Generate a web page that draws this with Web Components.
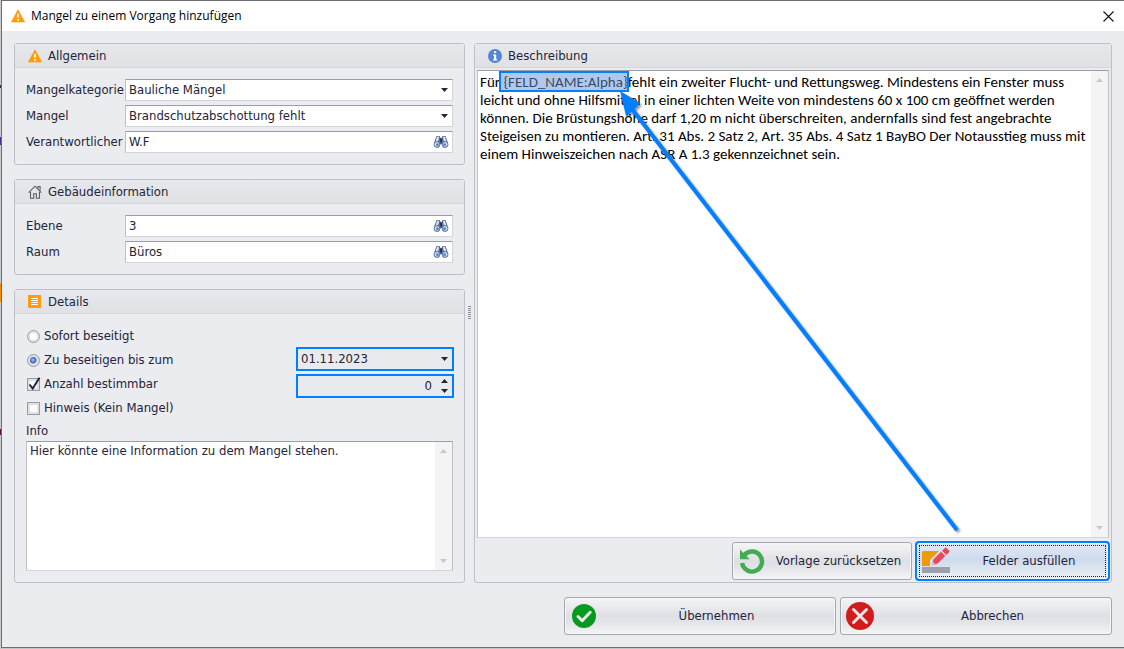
<!DOCTYPE html>
<html lang="de">
<head>
<meta charset="utf-8">
<title>Mangel zu einem Vorgang hinzufügen</title>
<style>
    html, body {
        height: 100%;
    }

    body {
        --text-color: #24243a;
        --panel-color: #ebecef;
        --border-color: #bfc0c7;
        --mark-color: #0080ff;
        margin: 0;
        color: var(--text-color);
        font: 13px/20px "DejaVu Sans Condensed", Tahoma, sans-serif;
    }
</style>
</head>
<body>
<defect-dialog data-title="Mangel zu einem Vorgang hinzufügen">
    <group-box slot="left" data-header="Allgemein" data-icon="warning">
        <lookup-field data-label="Mangelkategorie" data-value="Bauliche Mängel" data-type="select"></lookup-field>
        <lookup-field data-label="Mangel" data-value="Brandschutzabschottung fehlt" data-type="select"></lookup-field>
        <lookup-field data-label="Verantwortlicher" data-value="W.F"></lookup-field>
    </group-box>
    <group-box slot="left" data-header="Gebäudeinformation" data-icon="house">
        <lookup-field data-label="Ebene" data-value="3"></lookup-field>
        <lookup-field data-label="Raum" data-value="Büros"></lookup-field>
    </group-box>
    <group-box slot="left" class="grow" data-header="Details" data-icon="list">
        <defect-details></defect-details>
    </group-box>
    <group-box slot="right" class="flush" data-header="Beschreibung" data-icon="info">
        <defect-description></defect-description>
    </group-box>
    <action-button slot="footer" data-label="Übernehmen" data-icon="check"></action-button>
    <action-button slot="footer" data-label="Abbrechen" data-icon="cancel"></action-button>
</defect-dialog>

<script>
const icons = {
    warning: `<svg width="14" height="14" viewBox="0 0 14 14"><path d="M7 .8 13.7 13H.3Z" fill="#ff9c0a" stroke="#ff9c0a" stroke-linejoin="round" stroke-width=".6"/><path d="M6 4.8h2v4H6zM6 10h2v1.7H6z" fill="#f1eee8"/></svg>`,
    house: `<svg width="14" height="14" viewBox="0 0 14 14"><path d="M.7 7.6 7 1.2l6.3 6.4M2.5 7v6.3h3.2V8.7h2.7v4.6h3.1V7M10 3.4V1.5h2.1v4" fill="none" stroke="#5c5c68" stroke-width="1.1"/></svg>`,
    list: `<svg width="14" height="14" viewBox="0 0 14 14"><path d="M0 0h13v13H0z" fill="#ff9c0a"/><path d="M3 3.5h7M3 5.5h7M3 7.5h7M3 9.5h7" stroke="#fff" stroke-width="1"/></svg>`,
    info: `<svg width="14" height="14" viewBox="0 0 14 14"><circle cx="7" cy="7" r="7" fill="#5484d6"/><path d="M6 2.3h2.2v1.8H6zM5 5.5h3.2v4.8h1v1.2H5v-1.2h1V6.6H5z" fill="#fff"/></svg>`,
    search: `<svg width="16" height="14" viewBox="0 0 16 14"><path d="M3.5 1h3l1 2h1l1-2h3L15 8v3l-2 1.5h-3L8.5 9h-1L6 12.5H3L1 11V8Z" fill="#55688f"/><path d="M4 1.8h2L5.5 5.5 2.4 7.8ZM12 1.8h-2l.5 3.7 3.1 2.3Z" fill="#dfe6f2"/><circle cx="3.9" cy="9.4" r="2.9" fill="#d3deef" stroke="#5f73a0"/><circle cx="12.1" cy="9.4" r="2.9" fill="#d3deef" stroke="#5f73a0"/><circle cx="4.4" cy="9.7" r="1.4" fill="#557ec5"/><circle cx="11.6" cy="9.7" r="1.4" fill="#557ec5"/><path d="M7 3.5h2v4H7z" fill="#26365f"/></svg>`,
    down: `<svg width="7" height="4" viewBox="0 0 7 4"><path d="M0 0h7L3.5 4Z" fill="currentColor"/></svg>`,
    up: `<svg width="7" height="4" viewBox="0 0 7 4"><path d="M0 4h7L3.5 0Z" fill="currentColor"/></svg>`,
    check: `<svg width="28" height="28" viewBox="0 0 28 28"><circle cx="14" cy="14" r="12" fill="#069a20"/><path d="m8 14.5 4.2 4.2 8-8.4" fill="none" stroke="#e8f0ea" stroke-width="3" stroke-linecap="round" stroke-linejoin="round"/></svg>`,
    cancel: `<svg width="28" height="28" viewBox="0 0 28 28"><circle cx="14" cy="14" r="14" fill="#d21c1c"/><path d="m7.5 7.5 13 13m0-13-13 13" stroke="#f0e6e8" stroke-width="3" stroke-linecap="round"/></svg>`,
    reset: `<svg width="28" height="28" viewBox="0 0 28 28"><path d="M6.2 8.3A10 10 0 1 1 4.1 16" fill="none" stroke="#43ab50" stroke-width="4.4"/><path d="M2 2.5v9.7h9.7Z" fill="#43ab50"/></svg>`,
    edit: `<svg width="28" height="28" viewBox="0 0 28 28"><path d="M0 5 1 4h16L8 13v6H0Z" fill="#eb9d08"/><path d="M0 20h28v6H0z" fill="#9b9fae"/><path d="m9.8 18.2 1.8-6L19 4.8l4.3 4.3-7.5 7.5ZM20 3.8l2.9-2.9q.8-.8 1.6 0l2.7 2.7q.8.8 0 1.6l-2.9 2.9Z" fill="#e9485c"/><path d="m10 18 3-1-2-2Z" fill="#f3d8dc"/></svg>`,
    close: `<svg width="11" height="11" viewBox="0 0 11 11"><path d="m.5.5 10 10m0-10-10 10" stroke="#111" stroke-width="1.1"/></svg>`
};

const fieldStyles = `
    * {
        box-sizing: border-box;
    }
    .box {
        display: flex;
        align-items: center;
        height: 22px;
        min-width: 0;
        border: 1px solid #d4d5da;
        border-top-color: #9b9da6;
        border-left-color: #bfc0c8;
        background: white;
        position: relative;
    }
    input, select {
        appearance: none;
        flex: 1;
        width: 100%;
        min-width: 0;
        height: 20px;
        margin: 0;
        padding: 0 3px;
        border: 0;
        outline: 0;
        background: none;
        color: inherit;
        font: inherit;
    }
    button {
        display: flex;
        border: 0;
        padding: 0;
        background: none;
        color: inherit;
    }
    .arrow {
        display: flex;
        position: absolute;
        right: 4px;
        pointer-events: none;
    }
`;

const scrollStyles = `
    * {
        box-sizing: border-box;
    }
    .memo {
        display: flex;
        flex: 1;
        min-height: 0;
        border: 1px solid #d4d5da;
        border-top-color: #9b9da6;
        border-left-color: #bfc0c8;
        border-right-color: #bfc0c8;
        background: white;
    }
    textarea {
        flex: 1;
        min-width: 0;
        margin: 0;
        padding: 0 3px;
        border: 0;
        outline: 0;
        resize: none;
        overflow: hidden;
        background: none;
        color: inherit;
        font: inherit;
    }
    .scroll {
        display: flex;
        flex-direction: column;
        justify-content: space-between;
        align-items: center;
        width: 17px;
        padding: 7px 0;
        background: #f4f4f6;
        color: #c8c9cd;
    }
`;

class DefectDialog extends HTMLElement {
    constructor() {
        super();
        this.attachShadow({ mode: 'open' });
    }

    connectedCallback() {
        this.shadowRoot.innerHTML = `
            <style>
                * {
                    box-sizing: border-box;
                }
                :host {
                    display: flex;
                    height: 100vh;
                    box-sizing: border-box;
                    padding-bottom: 1px;
                    position: relative;
                    background: #c4c5c9;
                }
                .behind {
                    width: 1px;
                    background: linear-gradient(#cbccd0 85px, #333 85px 88px, #cbccd0 88px 137px, #4b2f8a 137px 145px, #cbccd0 145px 283px, #f08c00 283px 302px, #cbccd0 302px 429px, #5c1050 429px 435px, #cbccd0 435px);
                }
                .window {
                    display: flex;
                    flex-direction: column;
                    flex: 1;
                    min-width: 0;
                    border: 1px solid #6d6e72;
                    border-right: 0;
                    background: var(--panel-color);
                }
                header {
                    display: flex;
                    align-items: center;
                    gap: 6px;
                    height: 30px;
                    padding: 0 10px 0 9px;
                    background: white;
                    color: black;
                }
                header svg {
                    display: block;
                }
                h1 {
                    flex: 1;
                    margin: 0;
                    font: 12px/20px "Open Sans", "Segoe UI", sans-serif;
                }
                header button {
                    border: 0;
                    padding: 0;
                    background: none;
                }
                main {
                    display: grid;
                    grid-template-columns: minmax(0, 451fr) 9px minmax(0, 638fr);
                    flex: 1;
                    min-height: 0;
                    padding: 12px 12px 0;
                }
                .column {
                    display: flex;
                    flex-direction: column;
                    gap: 14px;
                    min-height: 0;
                }
                .splitter {
                    align-self: center;
                    justify-self: center;
                    width: 3px;
                    height: 14px;
                    background: repeating-linear-gradient(#8d8e98 0 1px, transparent 1px 2px);
                }
                footer {
                    display: flex;
                    gap: 4px;
                    width: calc(50% - 1px);
                    margin-left: auto;
                    padding: 14px 12px 12px 0;
                }
                ::slotted(action-button) {
                    flex: 1;
                }
                ::slotted(group-box[slot="right"]), ::slotted(.grow) {
                    flex: 1;
                    min-height: 0;
                }
            </style>
            <div class="behind"></div>
            <div class="window">
                <header>
                    ${icons.warning}
                    <h1>${this.getAttribute('data-title')}</h1>
                    <button aria-label="Schließen">${icons.close}</button>
                </header>
                <main>
                    <div class="column"><slot name="left"></slot></div>
                    <div class="splitter"></div>
                    <div class="column"><slot name="right"></slot></div>
                </main>
                <footer><slot name="footer"></slot></footer>
            </div>
            <callout-arrow></callout-arrow>
        `;
    }
}

class GroupBox extends HTMLElement {
    constructor() {
        super();
        this.attachShadow({ mode: 'open' });
    }

    connectedCallback() {
        this.shadowRoot.innerHTML = `
            <style>
                :host {
                    display: flex;
                    flex-direction: column;
                    box-sizing: border-box;
                    border: 1px solid var(--border-color);
                    border-radius: 3px;
                }
                .header {
                    display: flex;
                    align-items: center;
                    gap: 6px;
                    height: 23px;
                    padding-left: 13px;
                    border-bottom: 1px solid #d5d6da;
                    background: linear-gradient(#e7e8eb, #e0e1e5);
                }
                h2 {
                    margin: 0;
                    font: inherit;
                }
                .body {
                    display: flex;
                    flex-direction: column;
                    flex: 1;
                    gap: 4px;
                    min-height: 0;
                    padding: 11px;
                }
                :host(.flush) .body {
                    padding: 2px;
                }
            </style>
            <div class="header">${icons[this.getAttribute('data-icon')]}<h2>${this.getAttribute('data-header')}</h2></div>
            <div class="body"><slot></slot></div>
        `;
    }
}

class LookupField extends HTMLElement {
    constructor() {
        super();
        this.attachShadow({ mode: 'open' });
    }

    connectedCallback() {
        const value = this.getAttribute('data-value');
        let control = `<input id="field" value="${value}"><button class="find" aria-label="Suchen">${icons.search}</button>`;
        if (this.getAttribute('data-type') === 'select') {
            control = `<select id="field"><option>${value}</option></select><span class="arrow">${icons.down}</span>`;
        }

        this.shadowRoot.innerHTML = `
            <style>
                ${fieldStyles}
                :host {
                    display: grid;
                    grid-template-columns: 99px minmax(0, 1fr);
                    align-items: center;
                }
                .find {
                    margin-right: 3px;
                }
            </style>
            <label for="field">${this.getAttribute('data-label')}</label>
            <div class="box">${control}</div>
        `;
    }
}

class DefectDetails extends HTMLElement {
    constructor() {
        super();
        this.attachShadow({ mode: 'open' });
    }

    connectedCallback() {
        this.shadowRoot.innerHTML = `
            <style>
                ${fieldStyles}
                ${scrollStyles}
                :host {
                    display: flex;
                    flex-direction: column;
                    flex: 1;
                    min-height: 0;
                }
                .options {
                    display: grid;
                    grid-template-columns: minmax(0, 1fr) 156px;
                    grid-auto-rows: 24px;
                    align-items: center;
                    margin-top: -1px;
                }
                .option {
                    display: flex;
                    align-items: center;
                    gap: 4px;
                    grid-column: 1;
                }
                .option input {
                    flex: none;
                    width: 13px;
                    height: 13px;
                    margin: 0 0 0 1px;
                    padding: 0;
                    border: 1px solid #9899a3;
                    background: white;
                    box-shadow: inset 0 0 0 2px #dfe0e5;
                }
                .option input[type="radio"] {
                    border-radius: 50%;
                }
                .option input[type="radio"]:checked {
                    background: radial-gradient(circle at 5px 5px, #a9c4f5, #3c63bd 3px, #dfe5f3 4px);
                }
                .check {
                    display: flex;
                    position: relative;
                }
                .check svg {
                    position: absolute;
                    left: 1px;
                    bottom: 0;
                    pointer-events: none;
                }
                .check input:not(:checked) + svg {
                    display: none;
                }
                .values {
                    display: flex;
                    flex-direction: column;
                    gap: 5px;
                    grid-column: 2;
                    grid-row: 2 / 4;
                }
                .values .box {
                    background: #e9eaed;
                    outline: 2px solid var(--mark-color);
                    outline-offset: -1px;
                }
                .count input {
                    padding-right: 20px;
                    text-align: right;
                    appearance: textfield;
                }
                .count input::-webkit-inner-spin-button {
                    display: none;
                }
                .spin {
                    display: flex;
                    flex-direction: column;
                    gap: 6px;
                    position: absolute;
                    right: 4px;
                }
                .info {
                    line-height: 21px;
                }
                .memo textarea {
                    line-height: 18px;
                }
            </style>
            <div class="options">
                <div class="option"><input type="radio" name="due" id="now"><label for="now">Sofort beseitigt</label></div>
                <div class="option"><input type="radio" name="due" id="until" checked><label for="until">Zu beseitigen bis zum</label></div>
                <div class="option">
                    <span class="check"><input type="checkbox" id="countable" checked><svg width="14" height="14" viewBox="0 0 14 14"><path d="m2.5 7.5 3.2 4L12.5.8" fill="none" stroke="#22223a" stroke-width="2"/></svg></span>
                    <label for="countable">Anzahl bestimmbar</label>
                </div>
                <div class="option"><input type="checkbox" id="hint"><label for="hint">Hinweis (Kein Mangel)</label></div>
                <div class="values">
                    <div class="box">
                        <select aria-label="Datum"><option>01.11.2023</option></select>
                        <span class="arrow">${icons.down}</span>
                    </div>
                    <div class="box count">
                        <input type="number" aria-label="Anzahl" value="0">
                        <div class="spin">
                            <button aria-label="Mehr">${icons.up}</button>
                            <button aria-label="Weniger">${icons.down}</button>
                        </div>
                    </div>
                </div>
            </div>
            <label class="info" for="info">Info</label>
            <div class="memo">
                <textarea id="info">Hier könnte eine Information zu dem Mangel stehen.</textarea>
                <div class="scroll">${icons.up}${icons.down}</div>
            </div>
        `;
    }
}

class DefectDescription extends HTMLElement {
    constructor() {
        super();
        this.attachShadow({ mode: 'open' });
    }

    connectedCallback() {
        this.shadowRoot.innerHTML = `
            <style>
                ${scrollStyles}
                :host {
                    display: flex;
                    flex-direction: column;
                    flex: 1;
                    gap: 4px;
                    min-height: 0;
                }
                .memo {
                    position: relative;
                }
                textarea {
                    padding: 2px 0 2px 2px;
                    color: black;
                    font: 15px/18px Carlito, Calibri, Lato, sans-serif;
                }
                .placeholder-mark {
                    position: absolute;
                    left: 21px;
                    top: 0;
                    width: 130px;
                    height: 21px;
                    border: 2px solid var(--mark-color);
                    background: rgba(104, 143, 211, .5);
                    pointer-events: none;
                }
                .actions {
                    display: flex;
                    justify-content: flex-end;
                    gap: 4px;
                }
                action-button {
                    width: 180px;
                }
                action-button.marked {
                    width: 193px;
                }
            </style>
            <div class="memo">
                <textarea aria-label="Beschreibung">Für {FELD_NAME:Alpha}fehlt ein zweiter Flucht- und Rettungsweg. Mindestens ein Fenster muss
leicht und ohne Hilfsmittel in einer lichten Weite von mindestens 60 x 100 cm geöffnet werden
können. Die Brüstungshöhe darf 1,20 m nicht überschreiten, andernfalls sind fest angebrachte
Steigeisen zu montieren. Art. 31 Abs. 2 Satz 2, Art. 35 Abs. 4 Satz 1 BayBO Der Notausstieg muss mit
einem Hinweiszeichen nach ASR A 1.3 gekennzeichnet sein.</textarea>
                <div class="placeholder-mark"></div>
                <div class="scroll">${icons.up}${icons.down}</div>
            </div>
            <div class="actions">
                <action-button data-label="Vorlage zurücksetzen" data-icon="reset"></action-button>
                <action-button class="marked" data-label="Felder ausfüllen" data-icon="edit"></action-button>
            </div>
        `;
    }
}

class ActionButton extends HTMLElement {
    constructor() {
        super();
        this.attachShadow({ mode: 'open' });
    }

    connectedCallback() {
        this.shadowRoot.innerHTML = `
            <style>
                :host {
                    display: block;
                }
                button {
                    display: flex;
                    align-items: center;
                    box-sizing: border-box;
                    width: 100%;
                    height: 38px;
                    padding: 0 0 0 5px;
                    border: 1px solid #a6a7b0;
                    border-radius: 3px;
                    background: linear-gradient(#f5f5f7, #dfe0e5 50%, #e2e3e7 65%, #f5f5f7);
                    box-shadow: inset 0 0 0 1px #f4f4f6;
                    color: inherit;
                    font: inherit;
                }
                span {
                    flex: 1;
                    text-align: center;
                }
                :host(.marked) button {
                    background: linear-gradient(#e3e9f3, #cedbee 45%, #d9e2ee 65%, #edf1f3);
                    outline: 2px solid var(--mark-color);
                    outline-offset: -1px;
                    position: relative;
                }
                :host(.marked) button::after {
                    content: "";
                    position: absolute;
                    inset: 2px;
                    border: 1px dotted #222;
                }
            </style>
            <button>${icons[this.getAttribute('data-icon')]}<span>${this.getAttribute('data-label')}</span></button>
        `;
    }
}

// arrow from the fill button to the placeholder in the text
class CalloutArrow extends HTMLElement {
    constructor() {
        super();
        this.attachShadow({ mode: 'open' });
    }

    connectedCallback() {
        this.shadowRoot.innerHTML = `
            <style>
                :host {
                    display: block;
                    position: absolute;
                    left: 612px;
                    top: 84px;
                    pointer-events: none;
                }
                svg {
                    display: block;
                    filter: drop-shadow(2px 2px 1px rgba(0, 0, 0, .4));
                }
            </style>
            <svg width="360" height="460" viewBox="0 0 360 460">
                <path d="M20 25 345 446" stroke="#0080ff" stroke-width="4"/>
                <path d="M8 7 28 19 22 26 14 32Z" fill="#0080ff"/>
            </svg>
        `;
    }
}

customElements.define('defect-dialog', DefectDialog);
customElements.define('group-box', GroupBox);
customElements.define('lookup-field', LookupField);
customElements.define('defect-details', DefectDetails);
customElements.define('defect-description', DefectDescription);
customElements.define('action-button', ActionButton);
customElements.define('callout-arrow', CalloutArrow);
</script>
</body>
</html>
